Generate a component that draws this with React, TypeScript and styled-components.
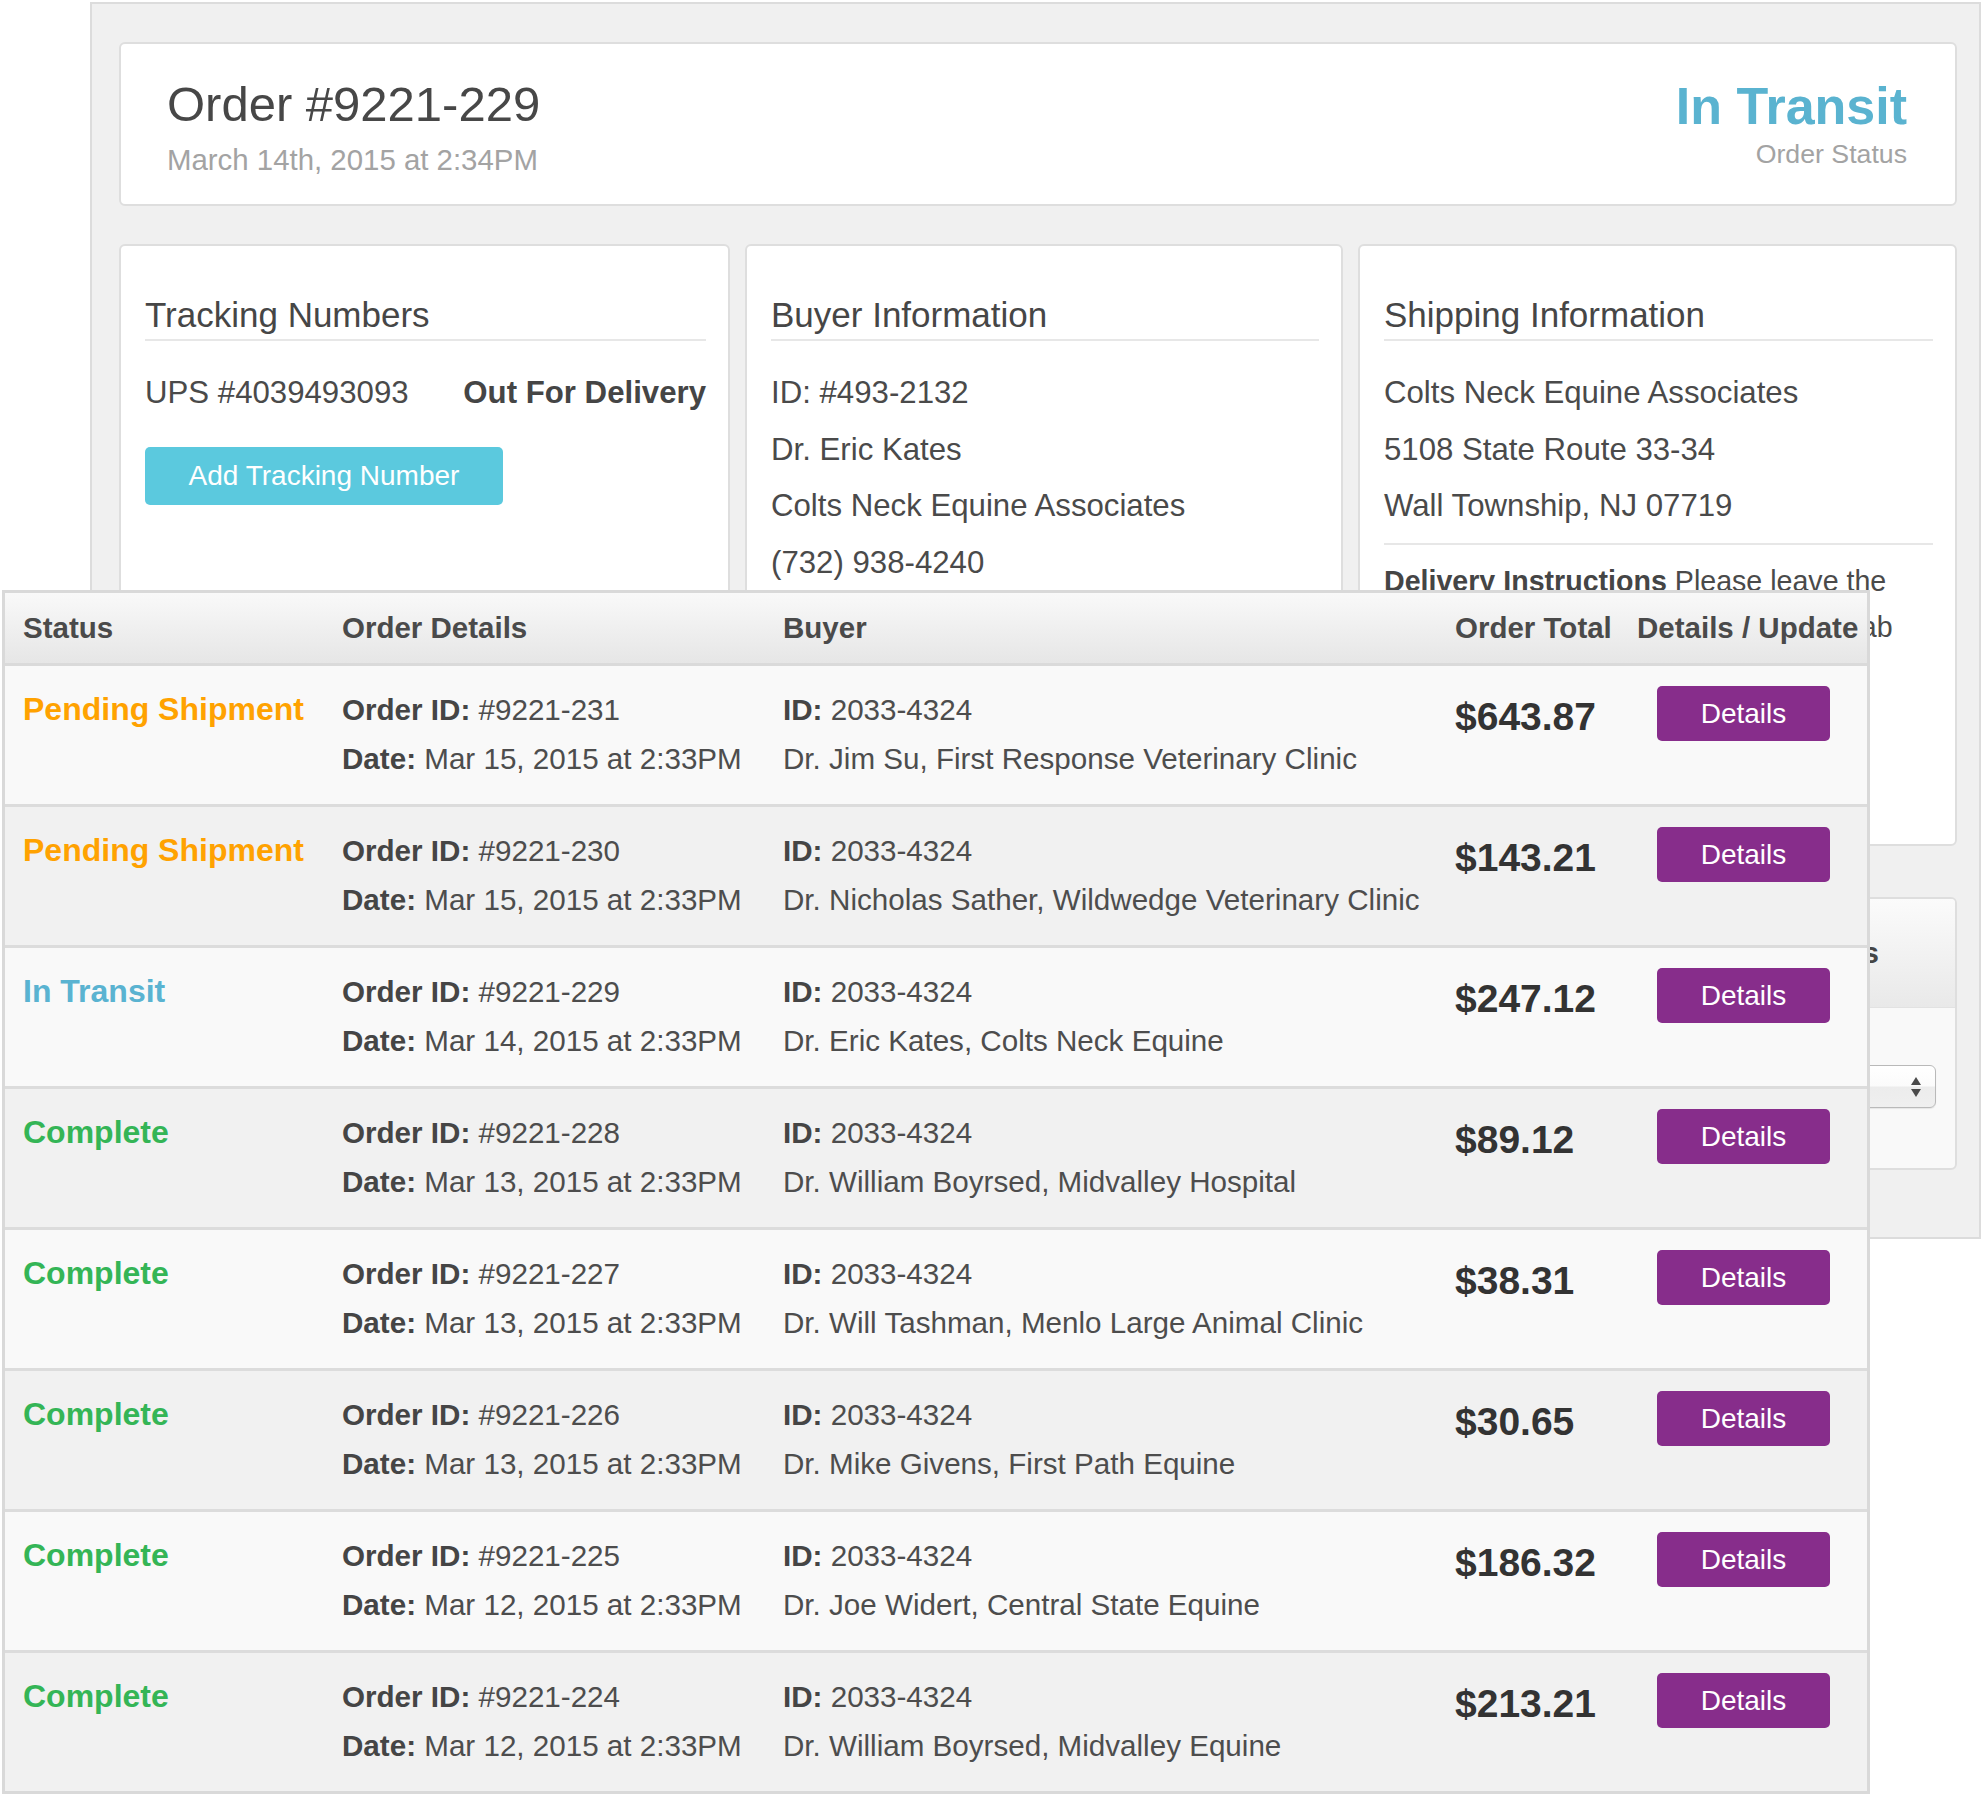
import React from 'react';
import styled, { createGlobalStyle } from 'styled-components';

const GlobalStyle = createGlobalStyle`
  html, body { margin: 0; padding: 0; background: #ffffff; }
  body { font-family: "Liberation Sans", Arial, Helvetica, sans-serif; color: #4a4a4a; }
  * { box-sizing: border-box; }
`;

const Stage = styled.div`
  position: relative;
  width: 1984px;
  height: 1797px;
  padding: 2px 0 0 90px;
  overflow: hidden;
`;

const Panel = styled.div`
  width: 1891px;
  background: #f0f0f0;
  border: 2px solid #dcdcdc;
  padding: 38px 22px 67px 27px;
`;

const HeaderCard = styled.div`
  height: 164px;
  background: #fff;
  border: 2px solid #dedede;
  border-radius: 6px;
  padding: 34px 48px 0 46px;
  display: flex;
  justify-content: space-between;
  align-items: flex-start;
`;

const TitleBlock = styled.div<{ $right?: boolean }>`
  display: flex;
  flex-direction: column;
  align-items: ${p => (p.$right ? 'flex-end' : 'flex-start')};
`;

const OrderTitle = styled.h1`
  margin: 0;
  font-size: 49px;
  line-height: 53px;
  font-weight: 400;
  color: #474747;
`;

const SubText = styled.div<{ $size: number; $lh: number; $mt: number }>`
  font-size: ${p => p.$size}px;
  line-height: ${p => p.$lh}px;
  margin-top: ${p => p.$mt}px;
  color: #a3a3a3;
`;

const BigStatus = styled.div`
  font-size: 52px;
  line-height: 56px;
  font-weight: 700;
  color: #5ab3d0;
`;

const CardGrid = styled.div`
  margin-top: 38px;
  display: grid;
  grid-template-columns: 611px 598px 1fr;
  grid-auto-rows: 602px;
  column-gap: 15px;
`;

const Card = styled.section`
  background: #fff;
  border: 2px solid #dedede;
  border-radius: 6px;
  padding: 49px 22px 0 24px;
  overflow: hidden;
`;

const CardTitle = styled.h2`
  margin: 0;
  font-size: 35px;
  line-height: 40px;
  font-weight: 400;
  color: #464646;
  padding-bottom: 4px;
  border-bottom: 2px solid #e7e7e7;
`;

const ItemList = styled.div<{ $gap: number }>`
  margin-top: 29px;
  display: flex;
  flex-direction: column;
  gap: ${p => p.$gap}px;
`;

const Item = styled.div`
  font-size: 31.2px;
  line-height: 45px;
  color: #4a4a4a;
  white-space: nowrap;
`;

const TrackingRow = styled(Item)`
  display: flex;
  justify-content: space-between;
`;

const Strong = styled.b`
  font-weight: 700;
  color: #454545;
`;

const AddButton = styled.button`
  margin-top: 32px;
  width: 358px;
  height: 58px;
  border: none;
  border-radius: 5px;
  background: #5bc9de;
  color: #fff;
  font-family: inherit;
  font-size: 28px;
  font-weight: 400;
  padding: 0;
`;

const Divider = styled.div`
  margin-top: 15px;
  height: 2px;
  background: #e7e7e7;
`;

const Instructions = styled.p`
  margin: 13px 0 0 0;
  font-size: 28.6px;
  line-height: 46px;
  color: #4a4a4a;
`;

const LowerGrid = styled.div`
  margin-top: 51px;
  display: grid;
  grid-template-columns: 611px 598px 1fr;
  column-gap: 15px;
`;

const StatusCard = styled.section`
  grid-column: 3;
  height: 273px;
  background: #f9f9f9;
  border: 2px solid #dedede;
  border-radius: 6px;
  overflow: hidden;
`;

const StatusCardHeader = styled.div`
  height: 109px;
  background: linear-gradient(#fbfbfb, #e9e9e9);
  border-bottom: 1px solid #e2e2e2;
  display: flex;
  align-items: center;
  justify-content: flex-end;
  padding-right: 76px;
  font-size: 30px;
  font-weight: 700;
  color: #454545;
`;

const StatusCardBody = styled.div`
  padding: 57px 19px 0 24px;
`;

const SelectBox = styled.div`
  height: 43px;
  border: 1px solid #b9b9b9;
  border-radius: 6px;
  background: linear-gradient(#ffffff 0%, #fbfbfb 48%, #ececec 52%, #efefef 100%);
  box-shadow: 0 1px 1px rgba(0, 0, 0, 0.08);
  display: flex;
  align-items: center;
  justify-content: flex-end;
  padding-right: 13px;
  font-size: 24px;
  color: #444;
`;

/* ---------- overlay table ---------- */

const TableOverlay = styled.div`
  position: absolute;
  left: 2px;
  top: 590px;
  width: 1868px;
  border: 3px solid #d9d9d9;
  background: #f9f9f9;
`;

const COLS = '319px 441px 672px 182px 1fr';

const HeadRow = styled.div`
  display: grid;
  grid-template-columns: ${COLS};
  padding-left: 18px;
  height: 73px;
  background: linear-gradient(#f9f9f9, #e6e6e6);
  border-bottom: 3px solid #dadada;
`;

const HeadCell = styled.div`
  font-size: 29.5px;
  line-height: 70px;
  font-weight: 700;
  color: #4a4a4a;
  white-space: nowrap;
`;

const Row = styled.div<{ $alt: boolean; $last: boolean }>`
  display: grid;
  grid-template-columns: ${COLS};
  padding: 19px 0 0 18px;
  height: ${p => (p.$last ? 138 : 141)}px;
  background: ${p => (p.$alt ? '#f1f1f1' : '#f9f9f9')};
  border-bottom: ${p => (p.$last ? 'none' : '3px solid #dcdcdc')};
`;

type Status = 'pending' | 'transit' | 'complete';

const statusColor: Record<Status, string> = {
  pending: '#ffa200',
  transit: '#5ab3d1',
  complete: '#34b556',
};

const statusLabel: Record<Status, string> = {
  pending: 'Pending Shipment',
  transit: 'In Transit',
  complete: 'Complete',
};

const StatusText = styled.div<{ $status: Status }>`
  font-size: 32px;
  line-height: 49px;
  font-weight: 700;
  color: ${p => statusColor[p.$status]};
  white-space: nowrap;
`;

const Lines = styled.div`
  display: flex;
  flex-direction: column;
`;

const Line = styled.div`
  font-size: 29.6px;
  line-height: 49px;
  color: #4d4d4d;
  white-space: nowrap;
`;

const Total = styled.div`
  font-size: 39px;
  line-height: 64px;
  font-weight: 700;
  color: #333333;
  white-space: nowrap;
`;

const DetailsButton = styled.button`
  margin: 1px 0 0 20px;
  width: 173px;
  height: 55px;
  border: none;
  border-radius: 5px;
  background: #872d8b;
  color: #fff;
  font-family: inherit;
  font-size: 28px;
  padding: 0;
`;

const orders: { status: Status; id: string; date: string; buyer: string; total: string }[] = [
  { status: 'pending', id: '#9221-231', date: 'Mar 15, 2015 at 2:33PM', buyer: 'Dr. Jim Su, First Response Veterinary Clinic', total: '$643.87' },
  { status: 'pending', id: '#9221-230', date: 'Mar 15, 2015 at 2:33PM', buyer: 'Dr. Nicholas Sather, Wildwedge Veterinary Clinic', total: '$143.21' },
  { status: 'transit', id: '#9221-229', date: 'Mar 14, 2015 at 2:33PM', buyer: 'Dr. Eric Kates, Colts Neck Equine', total: '$247.12' },
  { status: 'complete', id: '#9221-228', date: 'Mar 13, 2015 at 2:33PM', buyer: 'Dr. William Boyrsed, Midvalley Hospital', total: '$89.12' },
  { status: 'complete', id: '#9221-227', date: 'Mar 13, 2015 at 2:33PM', buyer: 'Dr. Will Tashman, Menlo Large Animal Clinic', total: '$38.31' },
  { status: 'complete', id: '#9221-226', date: 'Mar 13, 2015 at 2:33PM', buyer: 'Dr. Mike Givens, First Path Equine', total: '$30.65' },
  { status: 'complete', id: '#9221-225', date: 'Mar 12, 2015 at 2:33PM', buyer: 'Dr. Joe Widert, Central State Equine', total: '$186.32' },
  { status: 'complete', id: '#9221-224', date: 'Mar 12, 2015 at 2:33PM', buyer: 'Dr. William Boyrsed, Midvalley Equine', total: '$213.21' },
];

const SelectArrows = () => (
  <svg width="12" height="22" viewBox="0 0 12 22" aria-hidden>
    <path d="M6 1 L11 9 L1 9 Z" fill="#4a4a4a" />
    <path d="M1 13 L11 13 L6 21 Z" fill="#4a4a4a" />
  </svg>
);

export default function App() {
  return (
    <>
      <GlobalStyle />
      <Stage>
        <Panel>
          <HeaderCard>
            <TitleBlock>
              <OrderTitle>Order #9221-229</OrderTitle>
              <SubText $size={29.4} $lh={36} $mt={11}>March 14th, 2015 at 2:34PM</SubText>
            </TitleBlock>
            <TitleBlock $right>
              <BigStatus>In Transit</BigStatus>
              <SubText $size={26.7} $lh={32} $mt={4}>Order Status</SubText>
            </TitleBlock>
          </HeaderCard>

          <CardGrid>
            <Card>
              <CardTitle>Tracking Numbers</CardTitle>
              <ItemList $gap={12}>
                <TrackingRow>
                  <span>UPS #4039493093</span>
                  <Strong>Out For Delivery</Strong>
                </TrackingRow>
              </ItemList>
              <AddButton>Add Tracking Number</AddButton>
            </Card>
            <Card>
              <CardTitle>Buyer Information</CardTitle>
              <ItemList $gap={11.5}>
                <Item>ID: #493-2132</Item>
                <Item>Dr. Eric Kates</Item>
                <Item>Colts Neck Equine Associates</Item>
                <Item>(732) 938-4240</Item>
              </ItemList>
            </Card>
            <Card>
              <CardTitle>Shipping Information</CardTitle>
              <ItemList $gap={11.5}>
                <Item>Colts Neck Equine Associates</Item>
                <Item>5108 State Route 33-34</Item>
                <Item>Wall Township, NJ 07719</Item>
              </ItemList>
              <Divider />
              <Instructions>
                <Strong>Delivery Instructions</Strong> Please leave the package at the front desk of the east lab
              </Instructions>
            </Card>
          </CardGrid>

          <LowerGrid>
            <StatusCard>
              <StatusCardHeader>Update Order Status</StatusCardHeader>
              <StatusCardBody>
                <SelectBox>
                  <SelectArrows />
                </SelectBox>
              </StatusCardBody>
            </StatusCard>
          </LowerGrid>
        </Panel>

        <TableOverlay>
          <HeadRow>
            <HeadCell>Status</HeadCell>
            <HeadCell>Order Details</HeadCell>
            <HeadCell>Buyer</HeadCell>
            <HeadCell>Order Total</HeadCell>
            <HeadCell>Details / Update</HeadCell>
          </HeadRow>
          {orders.map((o, i) => (
            <Row key={o.id} $alt={i % 2 === 1} $last={i === orders.length - 1}>
              <StatusText $status={o.status}>{statusLabel[o.status]}</StatusText>
              <Lines>
                <Line><Strong>Order ID:</Strong> {o.id}</Line>
                <Line><Strong>Date:</Strong> {o.date}</Line>
              </Lines>
              <Lines>
                <Line><Strong>ID:</Strong> 2033-4324</Line>
                <Line>{o.buyer}</Line>
              </Lines>
              <Total>{o.total}</Total>
              <div>
                <DetailsButton>Details</DetailsButton>
              </div>
            </Row>
          ))}
        </TableOverlay>
      </Stage>
    </>
  );
}
